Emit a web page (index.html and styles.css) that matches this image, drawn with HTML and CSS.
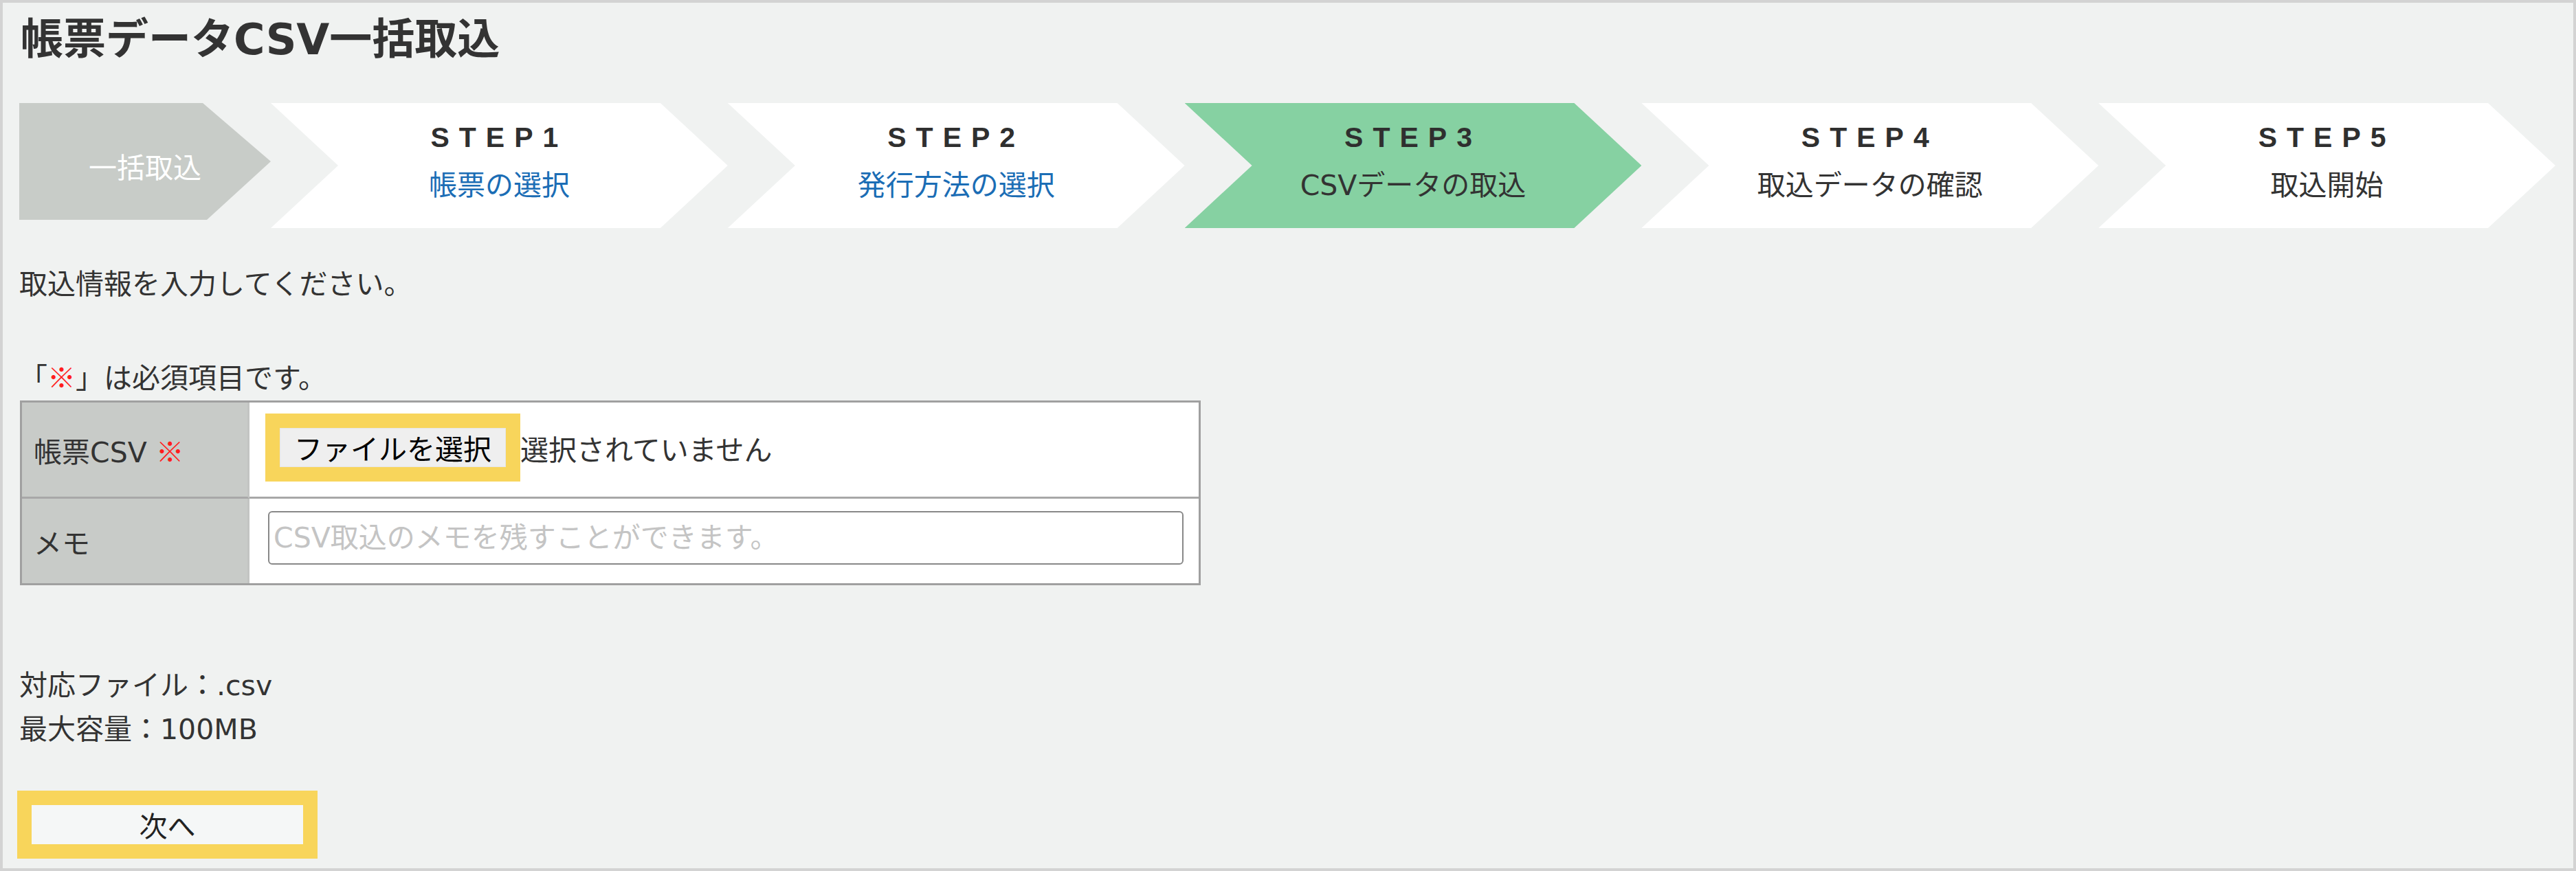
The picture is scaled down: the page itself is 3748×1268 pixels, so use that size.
FILE: index.html
```html
<!DOCTYPE html>
<html lang="ja">
<head>
<meta charset="utf-8">
<title>帳票データCSV一括取込</title>
<link rel="stylesheet" href="styles.css">
</head>
<body>
<div class="page">
  <h1 class="title">帳票データ<span class="lat">CSV</span>一括取込</h1>

  <ol class="steps">
    <li class="step step-start"><span class="step-name">一括取込</span></li>
    <li class="step"><span class="step-no">STEP1</span><span class="step-name link">帳票の選択</span></li>
    <li class="step"><span class="step-no">STEP2</span><span class="step-name link">発行方法の選択</span></li>
    <li class="step current"><span class="step-no">STEP3</span><span class="step-name"><span class="lat">CSV</span>データの取込</span></li>
    <li class="step"><span class="step-no">STEP4</span><span class="step-name">取込データの確認</span></li>
    <li class="step"><span class="step-no">STEP5</span><span class="step-name">取込開始</span></li>
  </ol>

  <p class="lead">取込情報を入力してください。</p>
  <p class="req-note">「<span class="req">※</span>」は必須項目です。</p>

  <table class="form">
    <tr class="row-file">
      <th>帳票<span class="lat">CSV </span><span class="req">※</span></th>
      <td>
        <div class="file-field">
          <span class="hl"><button class="file-btn" type="button">ファイルを選択</button></span>
          <span class="file-status">選択されていません</span>
        </div>
      </td>
    </tr>
    <tr class="row-memo">
      <th>メモ</th>
      <td><input class="memo" type="text" placeholder="CSV取込のメモを残すことができます。"></td>
    </tr>
  </table>

  <div class="notes">
    <p>対応ファイル：<span class="lat">.csv</span></p>
    <p>最大容量：<span class="lat">100MB</span></p>
  </div>

  <div class="hl next-wrap"><button class="next" type="button">次へ</button></div>
</div>
</body>
</html>
```

FILE: styles.css
```css
html, body {
  margin: 0;
  padding: 0;
}

.page {
  box-sizing: border-box;
  width: 3748px;
  height: 1268px;
  border: 4px solid #d3d3d3;
  background: #f0f2f1;
  padding: 0 26px 0 24px;
  font-family: "Noto Sans CJK JP", sans-serif;
  font-size: 41px;
  color: #333;
}

.lat {
  font-family: "DejaVu Sans", "Noto Sans CJK JP", sans-serif;
  line-height: 1;
}

.title {
  margin: 0;
  height: 96px;
  line-height: 96px;
  font-size: 62px;
  font-weight: 700;
  color: #333;
  padding-left: 2px;
}

/* ---------- steps ---------- */
.steps {
  display: flex;
  list-style: none;
  margin: 50px 0 0;
  padding: 0;
  height: 182px;
}

.step {
  flex: 1 1 0;
  box-sizing: border-box;
  height: 182px;
  background: #fff;
  clip-path: polygon(0 0, calc(100% - 98px) 0, 100% 50%, calc(100% - 98px) 100%, 0 100%, 98px 50%);
  display: flex;
  flex-direction: column;
  align-items: center;
  padding-top: 29px;
  text-align: center;
}

.step-start {
  flex: 0 0 366px;
  height: 170px;
  background: #c8ccc8;
  clip-path: polygon(0 0, calc(100% - 99px) 0, 100% 50%, calc(100% - 93px) 100%, 0 100%);
  color: #fff;
  padding-top: 71px;
}

.step.current {
  background: #86d1a2;
}

.step-no {
  display: block;
  font-family: "Liberation Sans", Arial, sans-serif;
  font-weight: 700;
  font-size: 41px;
  line-height: 42px;
  letter-spacing: 14px;
  color: #2f2f2f;
}

.step-name {
  display: block;
  line-height: 40px;
  margin-top: 25px;
  white-space: nowrap;
}

.step-start .step-name {
  margin-top: 0;
}

.step-name.link {
  color: #1b6db5;
}

/* ---------- text ---------- */
.lead {
  margin: 46px 0 0;
  line-height: 64px;
}

.req-note {
  margin: 73px 0 0;
  line-height: 64px;
}

.req {
  color: #ff1e1e;
  font-family: "Noto Sans CJK JP", sans-serif;
}

/* ---------- form table ---------- */
.form {
  margin: 4px 0 0 1px;
  width: 1718px;
  border-collapse: separate;
  border-spacing: 0;
  border: 3px solid #a0a0a0;
  background: #fff;
}

.form th {
  width: 311px;
  padding: 0 0 0 17px;
  background: #c8cbc8;
  border-right: 3px solid #c2c4c2;
  font-weight: 400;
  text-align: left;
  vertical-align: middle;
  line-height: 64px;
  color: #333;
}

.form td {
  vertical-align: middle;
}

.row-file th,
.row-file td {
  border-bottom: 3px solid #a8a8a8;
}

.row-file td {
  padding: 16px 0 22px 23px;
}

.row-memo td {
  padding: 18px 22px 27px 27px;
}

.file-field {
  display: flex;
  align-items: center;
}

.hl {
  display: inline-flex;
  background: #f8d55b;
  padding: 21px;
}

.file-btn {
  box-sizing: border-box;
  width: 329px;
  height: 57px;
  margin: 0;
  padding: 0;
  border: 1px solid #e6e6e6;
  background: #efefef;
  font-family: "Noto Sans CJK JP", sans-serif;
  font-size: 41px;
  line-height: 55px;
  color: #000;
}

.file-status {
  line-height: 64px;
  color: #333;
}

.memo {
  display: block;
  box-sizing: border-box;
  width: 100%;
  height: 78px;
  margin: 0;
  padding: 0 6px;
  border: 2px solid #888;
  border-radius: 6px;
  background: #fff;
  font-family: "DejaVu Sans", "Noto Sans CJK JP", sans-serif;
  font-size: 41px;
  color: #333;
}

.memo::placeholder {
  color: #c4c4c4;
}

/* ---------- notes & next ---------- */
.notes {
  margin-top: 110px;
}

.notes p {
  margin: 0;
  line-height: 64px;
}

.next-wrap {
  margin: 61px 0 0 -3px;
}

.next {
  width: 395px;
  height: 57px;
  margin: 0;
  padding: 0;
  border: none;
  background: #f5f7f7;
  font-family: "Noto Sans CJK JP", sans-serif;
  font-size: 41px;
  line-height: 57px;
  color: #222;
}
```
